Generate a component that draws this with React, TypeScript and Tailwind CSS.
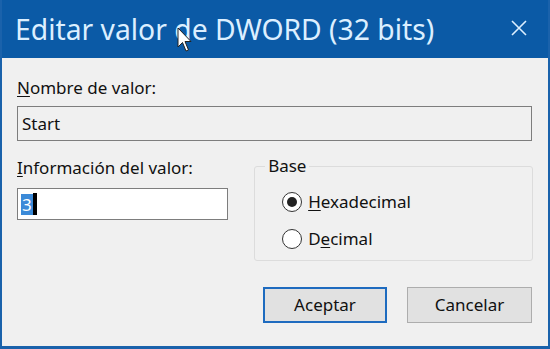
import React from 'react';

const font = { fontFamily: '"Noto Sans", "Open Sans", Arial, sans-serif' };

function Radio({ checked, label, hot }: { checked: boolean; label: string; hot: number }) {
  return (
    <div className="flex items-center h-[22px]">
      <span className="w-[20px] h-[20px] rounded-full border-[1.5px] border-[#333] bg-white flex items-center justify-center">
        {checked && <span className="w-[10px] h-[10px] rounded-full bg-[#222]" />}
      </span>
      <span className="ml-[6px] text-[17px] text-[#111] leading-[20px]">
        {label.slice(0, hot)}
        <span className="underline underline-offset-2">{label[hot]}</span>
        {label.slice(hot + 1)}
      </span>
    </div>
  );
}

export default function App() {
  return (
    <div style={font} className="relative w-[550px] h-[349px] overflow-hidden flex flex-col bg-[#0b5aa6] border-x-2 border-b-[3px] border-[#1a62ab]">
      {/* title bar */}
      <div className="h-[58px] flex items-center justify-between pl-[13px] pr-[20px] shrink-0">
        <span className="text-[28.3px] leading-none text-[#dcefff]">Editar valor de DWORD (32 bits)</span>
        <svg width="18" height="18" viewBox="0 0 18 18" className="mb-[2px]">
          <path d="M2 2 L16 16 M16 2 L2 16" stroke="#dcefff" strokeWidth="1.6" />
        </svg>
      </div>

      {/* body */}
      <div className="flex-1 bg-[#f0f0f0] px-[15px] flex flex-col text-[#111]">
        <div className="mt-[20px] text-[17px] leading-[20px]">
          <span className="underline underline-offset-2">N</span>ombre de valor:
        </div>
        <div className="mt-[8px] h-[35px] border border-[#7d7d7d] bg-[#f0f0f0] flex items-center px-[4px] text-[17px] mr-[1px]">
          Start
        </div>

        <div className="mt-[17px] flex">
          <div className="w-[212px] flex flex-col">
            <div className="text-[17px] leading-[20px]">
              <span className="underline underline-offset-2">I</span>nformación del valor:
            </div>
            <div className="mt-[10px] h-[32px] border border-[#7d7d7d] bg-white flex items-center px-[3px]">
              <span className="bg-[#3b8ad8] text-white text-[17px] leading-[21px] px-[1px]">3</span>
              <span className="w-[4px] h-[22px] bg-black" />
            </div>
          </div>

          <div className="relative ml-[26px] mt-[8px] w-[280px] h-[95px] border border-[#dcdcdc] rounded-[3px]">
            <span className="absolute -top-[11px] left-[10px] bg-[#f0f0f0] px-[3px] text-[17px] leading-[20px]">Base</span>
            <div className="pl-[27px] pt-[24px] flex flex-col gap-[15px]">
              <Radio checked label="Hexadecimal" hot={0} />
              <Radio checked={false} label="Decimal" hot={1} />
            </div>
          </div>
        </div>

        <div className="mt-[26px] flex justify-end gap-[20px] pr-[1px]">
          <button className="w-[124px] h-[36px] border-2 border-[#1e6bbf] bg-[#e1e1e1] text-[17px] text-[#111]">Aceptar</button>
          <button className="w-[125px] h-[36px] border border-[#adadad] bg-[#e1e1e1] text-[17px] text-[#111]">Cancelar</button>
        </div>
      </div>

      {/* mouse pointer over the title */}
      <svg width="16" height="26" viewBox="0 0 16 26" className="absolute left-[175px] top-[27px]">
        <path d="M1 1 L1 20 L5.5 15.5 L9 24 L11.5 23 L8 14.5 L14 14.5 Z" fill="white" stroke="#222" strokeWidth="1" />
      </svg>
    </div>
  );
}
